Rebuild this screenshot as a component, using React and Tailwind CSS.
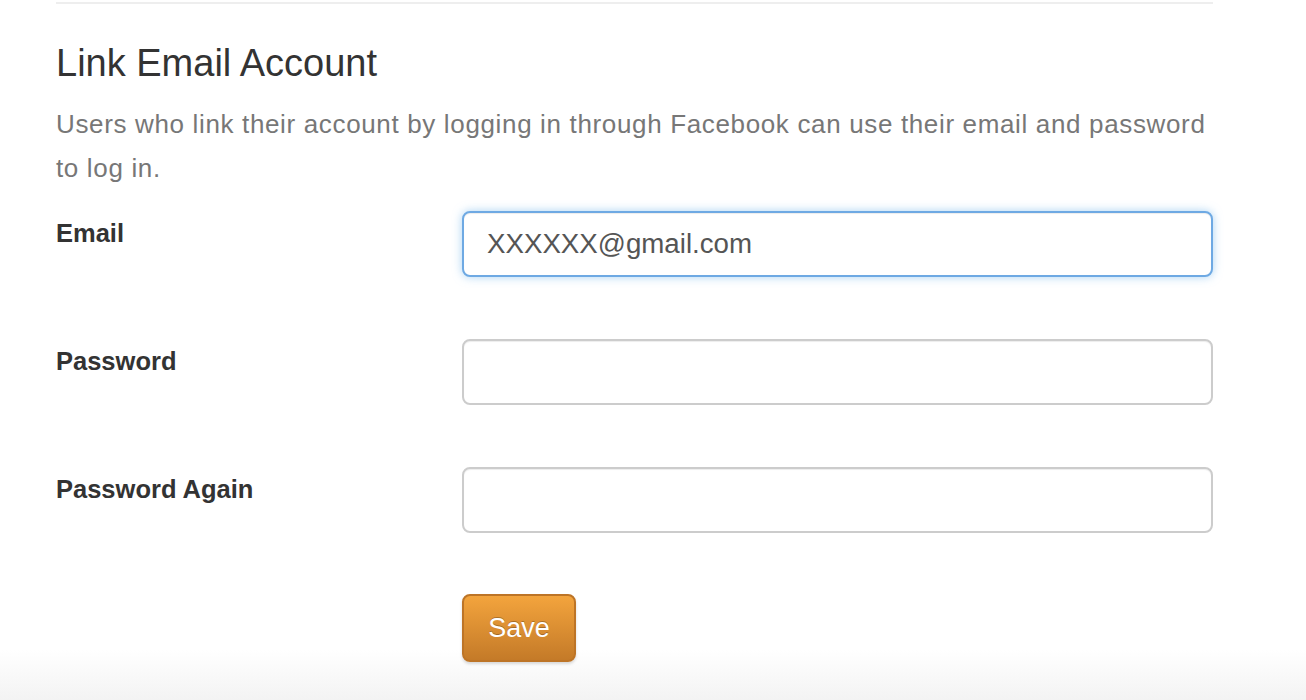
const fields = [
  { label: 'Email', type: 'email', value: 'XXXXXX@gmail.com', focused: true },
  { label: 'Password', type: 'password', value: '' },
  { label: 'Password Again', type: 'password', value: '' },
]

function Field({ label, type, value, focused }) {
  return (
    <div className="flex items-start">
      <label className="w-[406px] shrink-0 pt-[4px] text-[25.5px] font-bold leading-[36px] text-[#333]">{label}</label>
      <input
        type={type}
        defaultValue={value}
        className={
          focused
            ? 'h-[66px] flex-1 rounded-[8px] border-2 border-[#6ea9e3] bg-white px-[23px] text-[27.7px] text-[#555] shadow-[inset_0_1px_1px_rgba(0,0,0,0.075),0_0_10px_rgba(102,175,233,0.55)] outline-none'
            : 'h-[66px] flex-1 rounded-[8px] border-2 border-[#cccccc] bg-white px-[23px] text-[27.7px] text-[#555] shadow-[inset_0_1px_1px_rgba(0,0,0,0.075)] outline-none'
        }
      />
    </div>
  )
}

export default function App() {
  return (
    <div className="h-[700px] overflow-hidden bg-[linear-gradient(to_bottom,#ffffff_650px,#f3f3f3_700px)] font-['Liberation_Sans',Arial,sans-serif]">
      <div className="ml-[56px] w-[1157px] pt-[2px]">
        <div className="h-[2px] bg-[#eeeeee]" />

        <h2 className="mt-[37px] text-[38px] font-normal leading-[45.6px] text-[#333]">Link Email Account</h2>
        <p className="mt-[15px] text-[26px] leading-[44px] tracking-[0.65px] text-[#777]">
          Users who link their account by logging in through Facebook can use their email and password to log in.
        </p>

        <form className="mt-[21px] flex flex-col gap-[62px]" onSubmit={(e) => e.preventDefault()}>
          {fields.map((f) => (
            <Field key={f.label} {...f} />
          ))}
          <div className="-mt-[1px] pl-[406px]">
            <button
              type="submit"
              className="h-[68px] w-[114px] rounded-[8px] border-2 border-[#bd7426] bg-[linear-gradient(to_bottom,#f3a43d,#c47a28)] pt-[2px] text-[27px] text-white shadow-[0_2px_3px_rgba(0,0,0,0.15)] [text-shadow:0_-1px_0_rgba(0,0,0,0.25)]"
            >
              Save
            </button>
          </div>
        </form>
      </div>
    </div>
  )
}
